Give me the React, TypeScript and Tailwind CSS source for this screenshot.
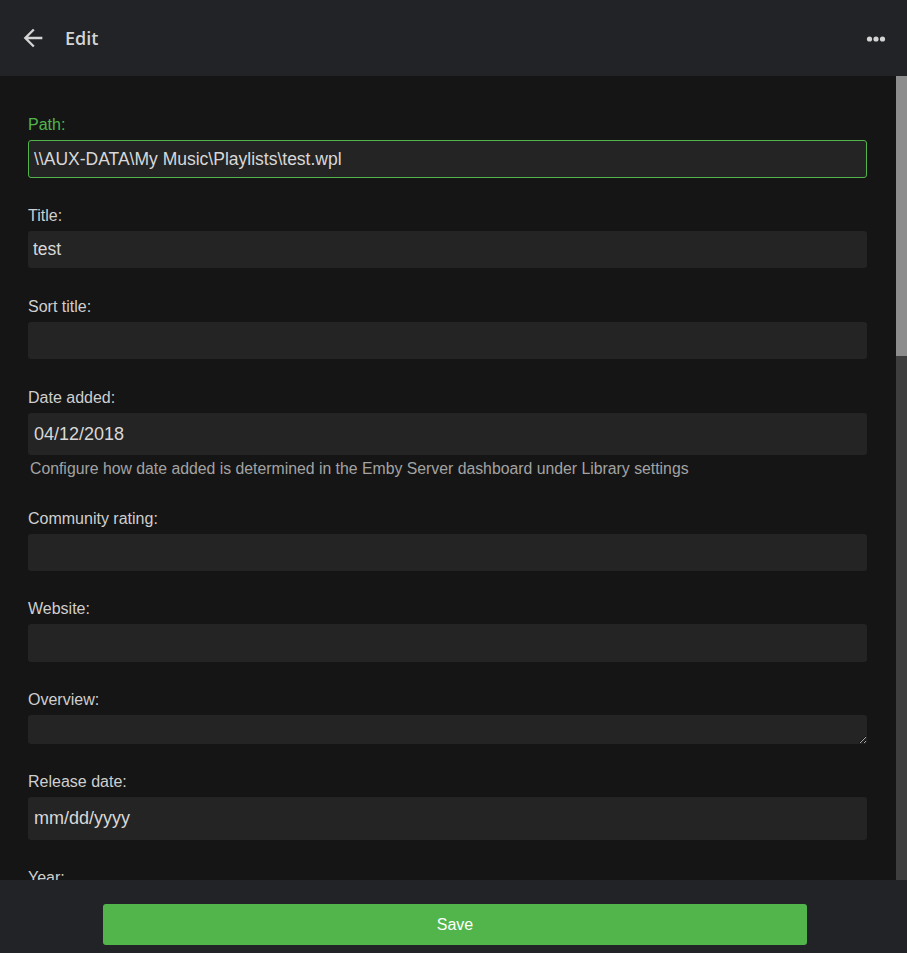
import React from "react";

const inputCls =
  "block w-full rounded-[3px] bg-[#242424] px-[5px] text-[17.5px] text-[#d8d8d8] outline-none placeholder:text-[#d8d8d8]";

function Label({ children, green }: { children: React.ReactNode; green?: boolean }) {
  return (
    <div className={"mb-[5px] text-[16px] leading-[20px] " + (green ? "text-[#52b54b]" : "text-[#cfcfcf]")}>
      {children}
    </div>
  );
}

function Field({
  label,
  value,
  h = 38,
  mb = 28,
  children,
}: {
  label: string;
  value?: string;
  h?: number;
  mb?: number;
  children?: React.ReactNode;
}) {
  return (
    <div style={{ marginBottom: mb }}>
      <Label>{label}</Label>
      <input readOnly defaultValue={value ?? ""} className={inputCls} style={{ height: h }} />
      {children}
    </div>
  );
}

export default function App() {
  return (
    <div
      className="flex h-[953px] w-[907px] flex-col bg-[#151515]"
      style={{ fontFamily: '"Liberation Sans", Arial, sans-serif' }}
    >
      <header className="flex h-[76px] shrink-0 items-center bg-[#222327] pl-[19px] pr-[20px]">
        <svg width="28" height="28" viewBox="0 0 24 24" fill="#d4d4d4" className="mt-[-1px]">
          <path d="M20 11H7.83l5.59-5.59L12 4l-8 8 8 8 1.41-1.41L7.83 13H20v-2z" />
        </svg>
        <div
          className="ml-[18px] text-[18px] font-semibold text-[#d4d4d4]"
          style={{ fontFamily: '"Open Sans", "Noto Sans", sans-serif' }}
        >
          Edit
        </div>
        <div className="flex-1" />
        <svg width="22" height="8" viewBox="0 0 22 8" fill="#d4d4d4" className="mr-[-1px] mt-[1px]">
          <circle cx="3.5" cy="4" r="2.6" />
          <circle cx="10" cy="4" r="2.6" />
          <circle cx="16.5" cy="4" r="2.6" />
        </svg>
      </header>

      <main className="flex min-h-0 flex-1 overflow-hidden">
        <div className="min-w-0 flex-1 overflow-hidden pl-[28px] pr-[29px] pt-[39px]">
          <div className="mb-[28px]">
            <Label green>Path:</Label>
            <input
              readOnly
              defaultValue="\\AUX-DATA\My Music\Playlists\test.wpl"
              className={inputCls + " h-[38px] border border-[#52b54b] px-[4px]"}
            />
          </div>
          <Field label="Title:" value="test" h={37} mb={29} />
          <Field label="Sort title:" h={37} mb={29} />
          <div className="mb-[30px]">
            <Label>Date added:</Label>
            <input readOnly defaultValue="04/12/2018" className={inputCls + " h-[42px] px-[6px] text-[18px]"} />
            <div className="mt-[4px] pl-[2px] text-[15.8px] leading-[20px] text-[#a3a3a3]">
              Configure how date added is determined in the Emby Server dashboard under Library settings
            </div>
          </div>
          <Field label="Community rating:" h={37} />
          <Field label="Website:" />
          <div className="mb-[28px]">
            <Label>Overview:</Label>
            <textarea
              readOnly
              defaultValue=""
              className="block h-[29px] w-full rounded-[3px] bg-[#242424] px-[5px] text-[17.5px] text-[#d8d8d8] outline-none [color-scheme:dark]"
            />
          </div>
          <div className="mb-[28px]">
            <Label>Release date:</Label>
            <input readOnly placeholder="mm/dd/yyyy" className={inputCls + " h-[43px] px-[6px] text-[18px]"} />
          </div>
          <Field label="Year:" />
          <Field label="Parental rating:" />
          <Field label="Custom rating:" />
        </div>
        <div className="flex w-[11px] shrink-0 flex-col bg-[#3e3e3e]">
          <div className="h-[280px] bg-[#8d8d8d]" />
        </div>
      </main>

      <footer className="flex h-[73px] shrink-0 justify-center bg-[#222327] pl-[3px] pt-[24px]">
        <button className="h-[41px] w-[704px] rounded-[3px] bg-[#52b54b] text-[16px] text-white">
          Save
        </button>
      </footer>
    </div>
  );
}
